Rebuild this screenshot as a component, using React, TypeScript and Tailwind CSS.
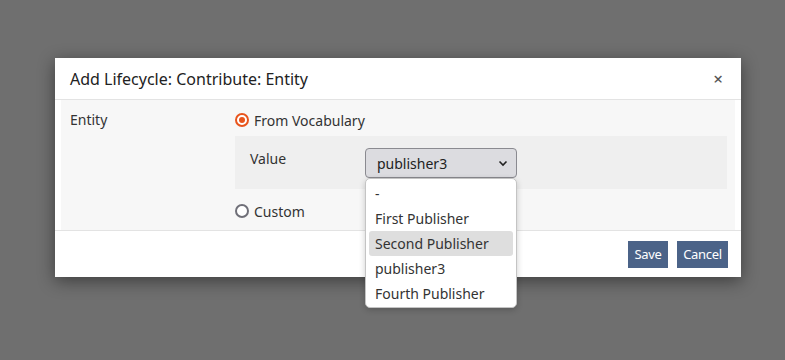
import React from "react"

const options = ["-", "First Publisher", "Second Publisher", "publisher3", "Fourth Publisher"]

function Radio({ checked }: { checked?: boolean }) {
  return checked ? (
    <span className="w-[14px] h-[14px] rounded-full border-[2px] border-[#e8541c] flex items-center justify-center bg-white">
      <span className="w-[6px] h-[6px] rounded-full bg-[#e8541c]" />
    </span>
  ) : (
    <span className="w-[14px] h-[14px] rounded-full border-[2px] border-[#6f6f78] bg-white" />
  )
}

export default function App() {
  const [selected] = React.useState("publisher3")

  return (
    <div
      className="w-[785px] h-[360px] bg-[#6f6f6f] relative overflow-hidden"
      style={{ fontFamily: "'Noto Sans', 'Open Sans', sans-serif" }}
    >
      <div className="absolute left-[55px] top-[58px] w-[686px] bg-white shadow-[0_4px_16px_rgba(0,0,0,0.45)]">
        {/* header */}
        <div className="h-[42px] flex items-center justify-between pl-[15px] pr-[18px] border-b border-[#e3e3e3]">
          <h2 className="text-[16px] text-[#222] pt-[1px]">Add Lifecycle: Contribute: Entity</h2>
          <span className="text-[#555] text-[17px] leading-none font-medium">×</span>
        </div>

        {/* body */}
        <div className="px-[6px]">
          <div className="bg-[#f7f7f7] h-[130px] flex pt-[9px] text-[14px] text-[#333]">
            <div className="w-[174px] pl-[9px]">Entity</div>
            <div className="flex-1 pr-[8px]">
              <label className="flex items-center gap-[5px] h-[20px] mt-[1px]">
                <Radio checked />
                <span>From Vocabulary</span>
              </label>
              <div className="mt-[6px] bg-[#efefef] h-[53px] flex pl-[15px] pt-[11px]">
                <div className="w-[115px] pt-[1px]">Value</div>
                <div className="relative">
                  <div className="w-[152px] h-[30px] mt-[1px] rounded-[4px] border border-[#8a8a90] bg-[#dcdce0] flex items-center justify-between pl-[11px] pr-[8px] text-[#222]">
                    <span>{selected}</span>
                    <svg width="10" height="7" viewBox="0 0 10 7" fill="none">
                      <path d="M1.5 1.5 L5 5 L8.5 1.5" stroke="#222" strokeWidth="1.6" />
                    </svg>
                  </div>
                  <ul className="absolute left-0 top-[31px] w-[152px] bg-white rounded-[5px] border border-[#c4c4c4] shadow-[0_2px_6px_rgba(0,0,0,0.2)] pt-[2px] pb-[1px] px-[3px] z-10">
                    {options.map((o) => (
                      <li
                        key={o}
                        className={`h-[25px] flex items-center pl-[6px] rounded-[3px] text-[#333] ${
                          o === "Second Publisher" ? "bg-[#dedede]" : ""
                        }`}
                      >
                        {o}
                      </li>
                    ))}
                  </ul>
                </div>
              </div>
              <label className="flex items-center gap-[5px] h-[20px] mt-[12px]">
                <Radio />
                <span>Custom</span>
              </label>
            </div>
          </div>
        </div>

        {/* footer */}
        <div className="border-t border-[#e3e3e3] h-[47px] flex items-center justify-end gap-[9px] pr-[13px] pt-[1px]">
          <button className="h-[27px] w-[40px] bg-[#4b6388] text-white text-[13px] tracking-[-0.3px]">Save</button>
          <button className="h-[27px] w-[51px] bg-[#4b6388] text-white text-[13px] tracking-[-0.3px]">Cancel</button>
        </div>
      </div>
    </div>
  )
}
